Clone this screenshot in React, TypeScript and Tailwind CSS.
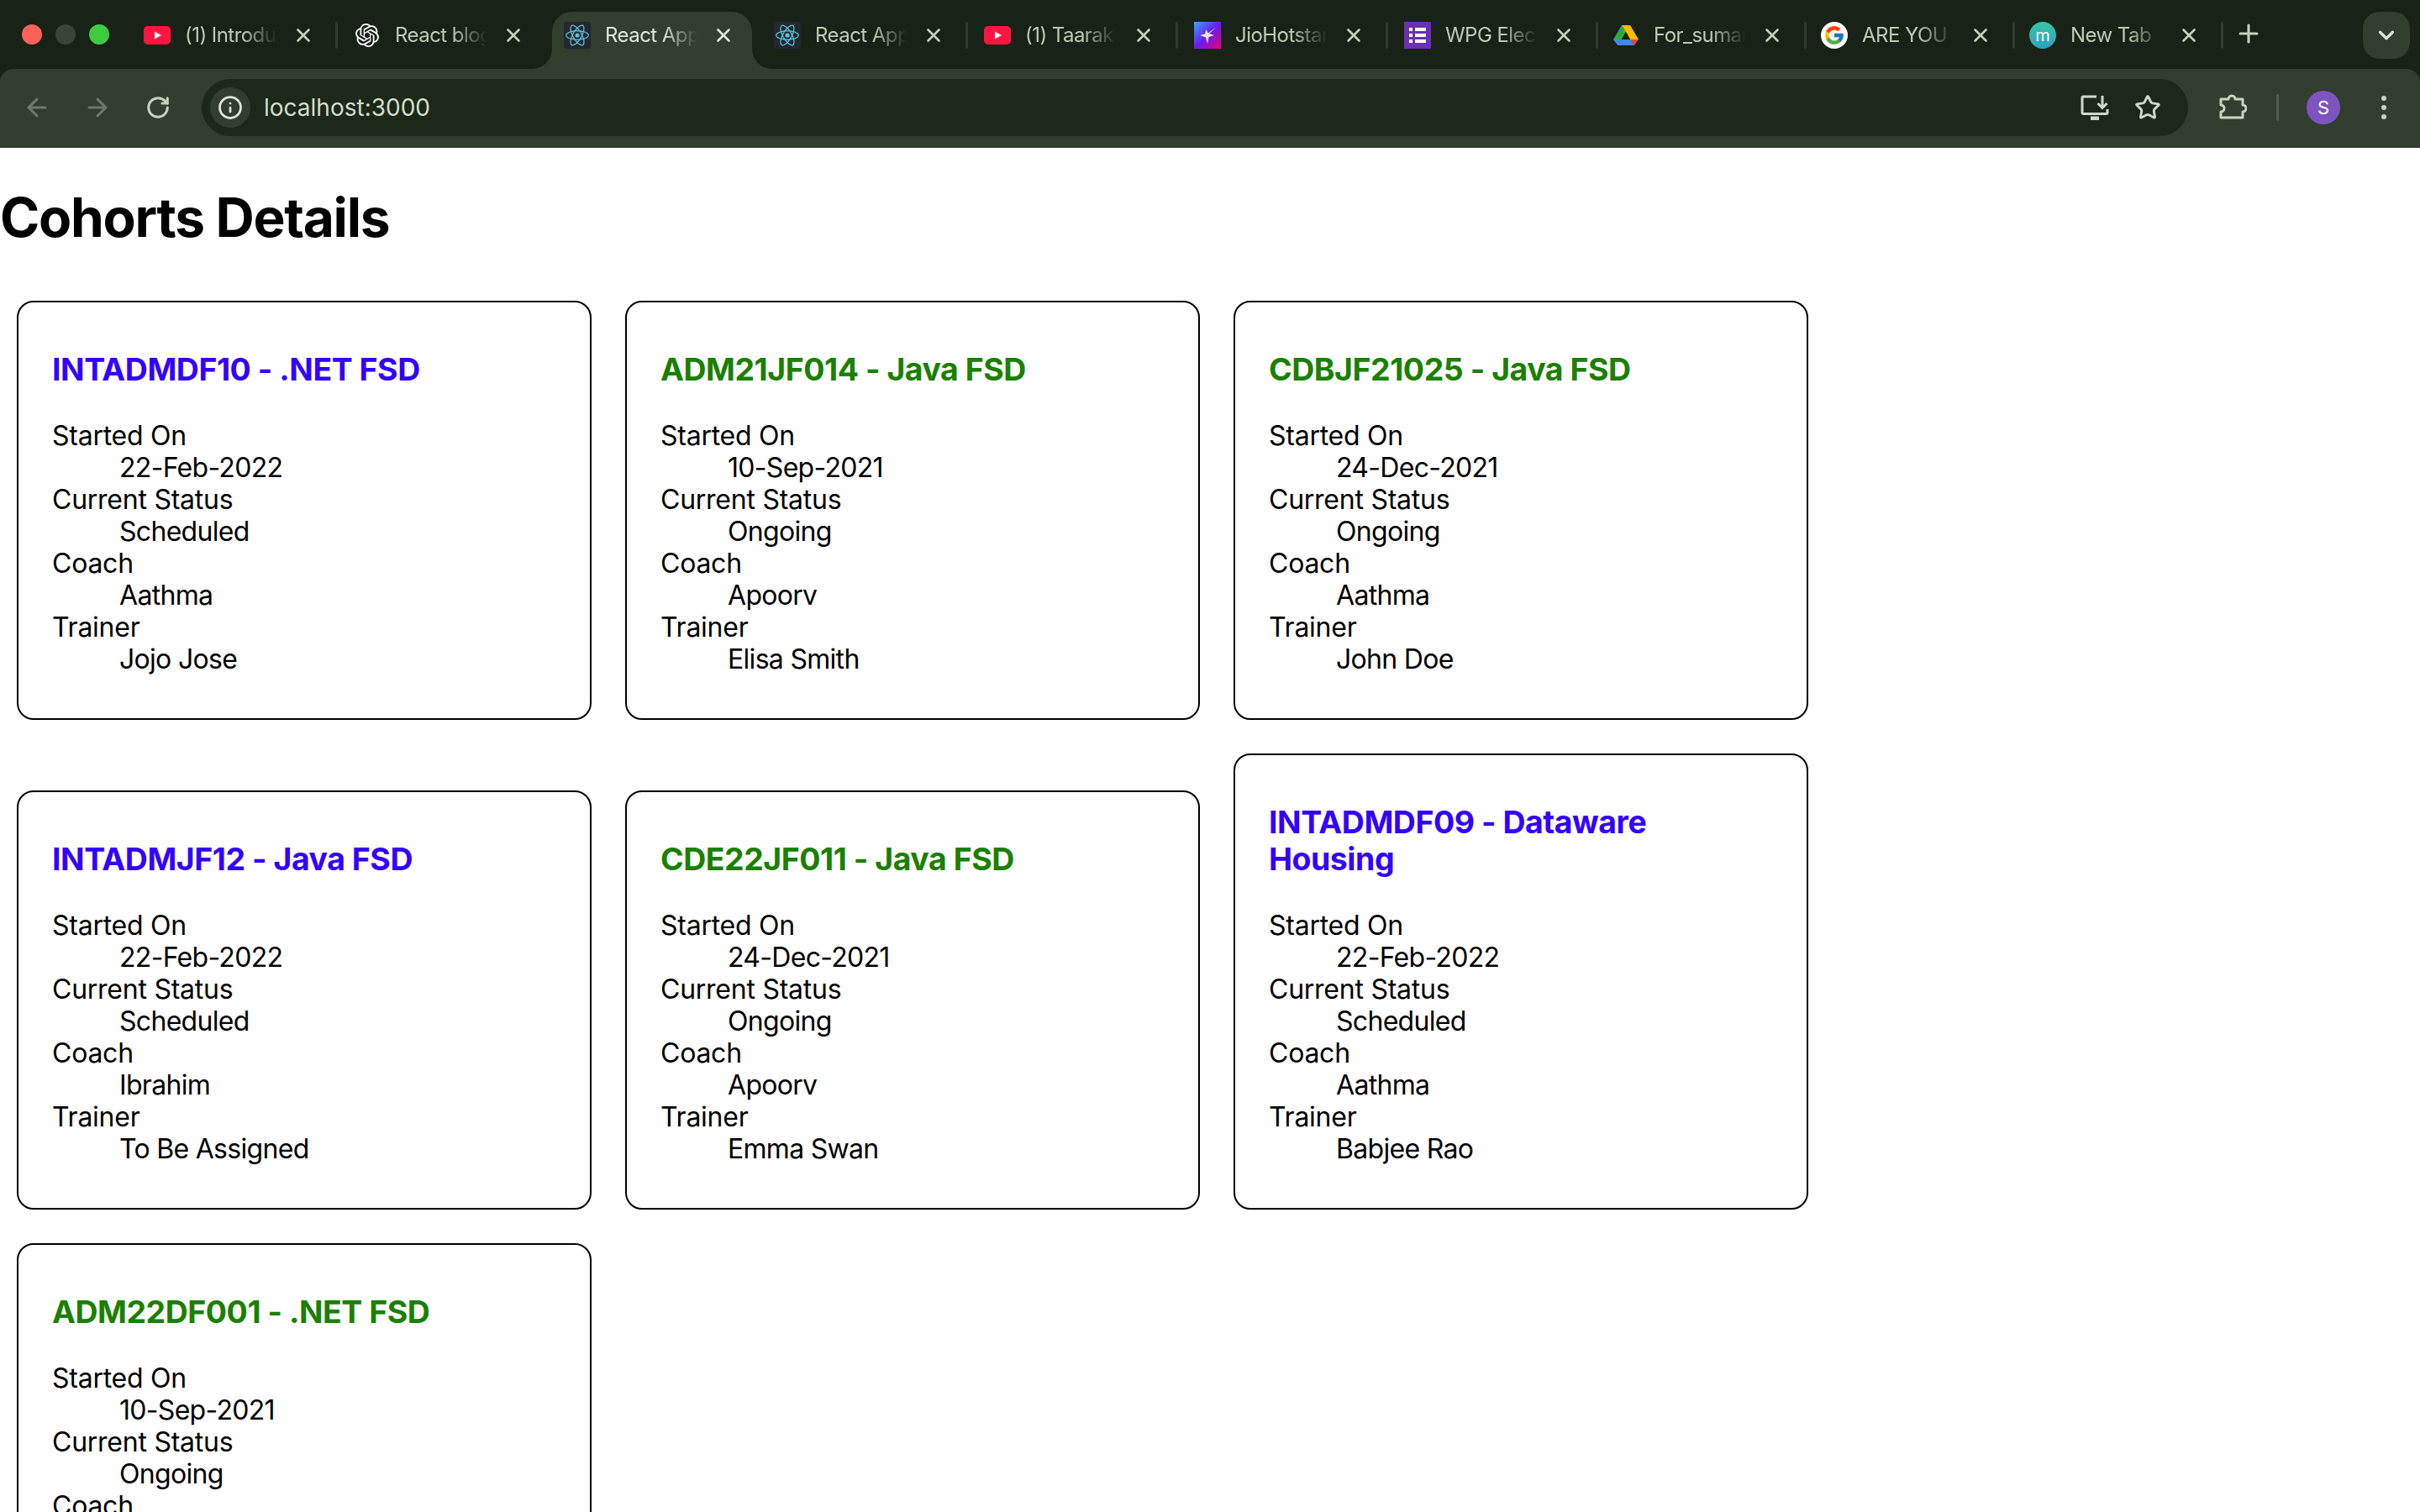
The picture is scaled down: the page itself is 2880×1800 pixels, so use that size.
import type { ReactNode } from "react";
import { ArrowLeft, ArrowRight, ChevronDown, Info, Plus, RotateCw, Star, X } from "lucide-react";
import { FcGoogle } from "react-icons/fc";
import { SiOpenai, SiReact } from "react-icons/si";

const YoutubeIcon = () => (
  <svg width="32" height="32" viewBox="0 0 32 32">
    <rect x="0" y="5" width="32" height="22" rx="5" fill="#ff1540" />
    <path d="M13 11.5 L21 16 L13 20.5 Z" fill="#fff" />
  </svg>
);

const ReactIcon = () => (
  <div className="flex h-8 w-8 items-center justify-center rounded-[4px] bg-[#23272f]">
    <SiReact size={28} color="#58c4dc" />
  </div>
);

const HotstarIcon = () => (
  <div className="flex h-8 w-8 items-center justify-center bg-[linear-gradient(135deg,#38a8ff_0%,#6a1cf0_50%,#e8006f_100%)]">
    <svg width="32" height="32" viewBox="0 0 32 32">
      <path d="M27 6 L18 14 L24 16 L17.5 18 L16 26 L14 18.5 L7 16 L13 14.5 L14.5 9 L16.5 13.5 Z" fill="#f3ece2" />
    </svg>
  </div>
);

const FormsIcon = () => (
  <div className="flex h-8 w-8 flex-col justify-center gap-[3px] bg-[#6c30b5] px-[6px]">
    {[0, 1, 2].map((i) => (
      <div key={i} className="flex h-[4px] gap-[3px]">
        <div className="w-[4px] bg-white" />
        <div className="flex-1 bg-white" />
      </div>
    ))}
  </div>
);

const DriveIcon = () => (
  <svg width="32" height="32" viewBox="0 0 32 32">
    <path d="M11 4 L1 21 L6.5 28 L16 12 Z" fill="#2da94f" />
    <path d="M11 4 H21 L31 21 H21 Z" fill="#fbbc04" />
    <path d="M1 21 H11 L16 21 L21 21 L31 21 L25.5 28 H6.5 Z" fill="#4285f4" />
    <path d="M21 21 H31 L25.5 28 Z" fill="#ea4335" />
    <path d="M11 21 L16 12 L21 21 Z" fill="#18221a" />
  </svg>
);

const GoogleIcon = () => (
  <div className="flex h-8 w-8 items-center justify-center rounded-full bg-white">
    <FcGoogle size={26} />
  </div>
);

const MIcon = () => (
  <div className="flex h-8 w-8 items-center justify-center rounded-full bg-[linear-gradient(180deg,#36c5a0_0%,#2f9fc4_100%)] text-[20px] leading-none text-white">
    m
  </div>
);

const tabs: { title: string; icon: ReactNode; active?: boolean; narrow?: boolean }[] = [
  { title: "(1) Introduction", icon: <YoutubeIcon /> },
  { title: "React blog post", icon: <SiOpenai size={28} color="#fff" className="mx-[2px]" /> },
  { title: "React App", icon: <ReactIcon />, active: true },
  { title: "React App", icon: <ReactIcon /> },
  { title: "(1) Taarak Mehta", icon: <YoutubeIcon /> },
  { title: "JioHotstar", icon: <HotstarIcon /> },
  { title: "WPG Elective", icon: <FormsIcon />, narrow: true },
  { title: "For_suman", icon: <DriveIcon />, narrow: true },
  { title: "ARE YOU", icon: <GoogleIcon />, narrow: true },
  { title: "New Tab", icon: <MIcon /> },
];

type Cohort = {
  code: string;
  name: string;
  started: string;
  status: string;
  coach: string;
  trainer: string;
};

const cohorts: Cohort[] = [
  { code: "INTADMDF10", name: ".NET FSD", started: "22-Feb-2022", status: "Scheduled", coach: "Aathma", trainer: "Jojo Jose" },
  { code: "ADM21JF014", name: "Java FSD", started: "10-Sep-2021", status: "Ongoing", coach: "Apoorv", trainer: "Elisa Smith" },
  { code: "CDBJF21025", name: "Java FSD", started: "24-Dec-2021", status: "Ongoing", coach: "Aathma", trainer: "John Doe" },
  { code: "INTADMJF12", name: "Java FSD", started: "22-Feb-2022", status: "Scheduled", coach: "Ibrahim", trainer: "To Be Assigned" },
  { code: "CDE22JF011", name: "Java FSD", started: "24-Dec-2021", status: "Ongoing", coach: "Apoorv", trainer: "Emma Swan" },
  { code: "INTADMDF09", name: "Dataware Housing", started: "22-Feb-2022", status: "Scheduled", coach: "Aathma", trainer: "Babjee Rao" },
  { code: "ADM22DF001", name: ".NET FSD", started: "10-Sep-2021", status: "Ongoing", coach: "Apoorv", trainer: "Jane Roe" },
];

function Tab({ title, icon, active, narrow, hideSeparator }: { title: string; icon: ReactNode; active?: boolean; narrow?: boolean; hideSeparator?: boolean }) {
  return (
    <div className={`flex h-[68px] shrink-0 items-start ${narrow ? "w-[248px]" : "w-[250px]"}`}>
      <div className={`relative -ml-[2px] flex h-full w-[238px] shrink-0 items-start rounded-t-[24px] pl-[14px] pt-[12px] ${active ? "bg-[#323e2e]" : ""}`}>
        {active && (
          <>
            <svg className="absolute bottom-0 -left-[24px]" width="24" height="24" viewBox="0 0 24 24">
              <path d="M0 24 A24 24 0 0 0 24 0 L24 24 Z" fill="#323e2e" />
            </svg>
            <svg className="absolute bottom-0 -right-[24px]" width="24" height="24" viewBox="0 0 24 24">
              <path d="M24 24 A24 24 0 0 1 0 0 L0 24 Z" fill="#323e2e" />
            </svg>
          </>
        )}
        <div className="flex h-8 w-8 shrink-0 items-center justify-center">{icon}</div>
        <div
          className={`ml-[17px] h-8 w-[110px] shrink-0 overflow-hidden whitespace-nowrap pt-[1px] text-[24px] leading-[30px] tracking-[-0.55px] [mask-image:linear-gradient(90deg,#000_62%,transparent_100%)] ${active ? "text-[#e1e7db]" : "text-[#bfcbb6]"}`}
        >
          {title}
        </div>
        <X size={26} strokeWidth={2.4} className={`ml-[18px] mt-[3px] shrink-0 ${active ? "text-[#e1e7db]" : "text-[#c6d1bd]"}`} />
      </div>
      {!hideSeparator && <div className="ml-[4px] mt-[12px] h-8 w-[3px] shrink-0 rounded-full bg-[#303b2d]" />}
    </div>
  );
}

function TabStrip() {
  return (
    <div className="flex h-[82px] items-start">
      <div className="flex w-[159px] shrink-0 items-center gap-4 pl-[26px] pt-[29px]">
        <div className="h-6 w-6 rounded-full bg-[#ff6158]" />
        <div className="h-6 w-6 rounded-full bg-[#3a453a]" />
        <div className="h-6 w-6 rounded-full bg-[#3fcb3f]" />
      </div>
      <div className="mt-[14px] flex">
        {tabs.map((t, i) => (
          <Tab key={i} title={t.title} icon={t.icon} active={t.active} narrow={t.narrow} hideSeparator={t.active || tabs[i + 1]?.active} />
        ))}
        <Plus size={34} strokeWidth={2.2} className="ml-[6px] mt-[9px] shrink-0 text-[#c6d1bd]" />
      </div>
      <div className="ml-auto mr-[12px] mt-[14px] flex h-[56px] w-[56px] items-center justify-center rounded-[20px] bg-[#323e2e]">
        <ChevronDown size={30} strokeWidth={2.6} className="text-[#dfe6d9]" />
      </div>
    </div>
  );
}

function Toolbar() {
  return (
    <div className="flex h-[94px] items-start rounded-t-[16px] border-b-2 border-[#2e392b] bg-[#323e2e]">
      <div className="flex w-[240px] shrink-0 items-center pl-[27px] pt-[29px]">
        <ArrowLeft size={34} strokeWidth={2.2} className="text-[#6d7a68]" />
        <ArrowRight size={34} strokeWidth={2.2} className="ml-[38px] text-[#6d7a68]" />
        <RotateCw size={30} strokeWidth={2.4} className="ml-[40px] text-[#c6d1bd]" />
      </div>
      <div className="mt-[12px] flex h-[68px] w-[2364px] shrink-0 items-center rounded-full bg-[#1c2818] pl-[10px]">
        <div className="flex h-[48px] w-[48px] items-center justify-center rounded-full bg-[#323e2e]">
          <Info size={30} strokeWidth={2.2} className="text-[#e1e7db]" />
        </div>
        <span className="ml-[16px] text-[28px] leading-none text-[#d4ddcd]">localhost:3000</span>
        <svg className="ml-auto" width="34" height="30" viewBox="0 0 34 30" fill="none" stroke="#d0d9c8" strokeWidth="3">
          <path d="M19 2 H3.5 A1.5 1.5 0 0 0 2 3.5 V21 A1.5 1.5 0 0 0 3.5 22.5 H30.5 A1.5 1.5 0 0 0 32 21 V17" />
          <path d="M12 28 H22" strokeWidth="5" />
          <path d="M26 1 V15 M20.5 10 L26 15.5 L31.5 10" />
        </svg>
        <Star size={32} strokeWidth={2.2} className="ml-[30px] mr-[32px] text-[#d0d9c8]" />
      </div>
      <svg className="ml-[36px] mt-[27px] shrink-0" width="34" height="34" viewBox="0 0 34 34" fill="none" stroke="#c9d4c0" strokeWidth="3">
        <path d="M3 9 H12 A4 4 0 0 1 20 9 H29 V16 A3 3 0 0 1 29 24 V31 H3 V24 A4 4 0 0 0 3 16 Z" strokeLinejoin="round" />
      </svg>
      <div className="ml-[35px] mt-[30px] h-8 w-[3px] rounded-full bg-[#50604b]" />
      <div className="ml-[33px] mt-[26px] flex h-10 w-10 items-center justify-center rounded-full bg-[#7e55c0] text-[22px] leading-none text-white">
        S
      </div>
      <div className="ml-[49px] mt-[32px] flex flex-col gap-[5px]">
        <div className="h-[6px] w-[6px] rounded-full bg-[#c9d4c0]" />
        <div className="h-[6px] w-[6px] rounded-full bg-[#c9d4c0]" />
        <div className="h-[6px] w-[6px] rounded-full bg-[#c9d4c0]" />
      </div>
    </div>
  );
}

function CohortCard({ cohort }: { cohort: Cohort }) {
  const color = cohort.status === "Scheduled" ? "text-[#3300ff]" : "text-[#1a8000]";
  const rows = [
    ["Started On", cohort.started],
    ["Current Status", cohort.status],
    ["Coach", cohort.coach],
    ["Trainer", cohort.trainer],
  ];
  return (
    <div className="m-[20px] w-[684px] shrink-0 rounded-[20px] border-2 border-black px-[40px] py-[20px]">
      <h3 className={`mt-[38px] mb-[38px] text-[37.44px] leading-[44px] font-bold tracking-[-0.45px] ${color}`}>
        {cohort.code} - {cohort.name}
      </h3>
      <dl className="mb-[31px] text-[32px] leading-[38px] text-black">
        {rows.map(([label, value]) => (
          <div key={label}>
            <dt className="tracking-[-0.25px]">{label}</dt>
            <dd className="ml-[80px] tracking-[-0.7px]">{value}</dd>
          </div>
        ))}
      </dl>
    </div>
  );
}

export default function App() {
  return (
    <div className="h-screen overflow-hidden bg-white font-['Inter',sans-serif]">
      <div className="bg-[#182216]">
        <TabStrip />
        <Toolbar />
      </div>
      <h1 className="mt-[44px] mb-[41px] text-[64px] leading-[77px] font-bold tracking-[-1.3px] text-black">Cohorts Details</h1>
      <div className="flex w-[2200px] flex-wrap items-end">
        {cohorts.map((c) => (
          <CohortCard key={c.code} cohort={c} />
        ))}
      </div>
    </div>
  );
}
